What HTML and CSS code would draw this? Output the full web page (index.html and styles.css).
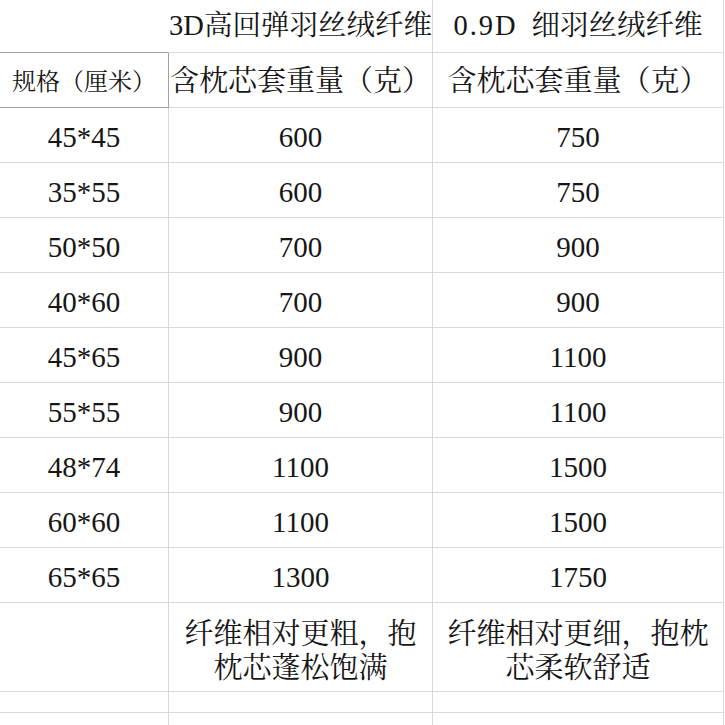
FILE: index.html
```html
<!DOCTYPE html>
<html lang="zh">
<head>
<meta charset="utf-8">
<title>枕芯规格</title>
<link rel="stylesheet" href="styles.css">
</head>
<body>
<div class="sheet">
  <div class="cell top first sel-bottom"></div>
  <div class="cell top">3D高回弹羽丝绒纤维</div>
  <div class="cell top"><span class="half">0.9D</span>细羽丝绒纤维</div>

  <div class="cell spec sel">规格（厘米）</div>
  <div class="cell">含枕芯套重量（克）</div>
  <div class="cell">含枕芯套重量（克）</div>

  <div class="cell num">45*45</div><div class="cell num">600</div><div class="cell num">750</div>
  <div class="cell num">35*55</div><div class="cell num">600</div><div class="cell num">750</div>
  <div class="cell num">50*50</div><div class="cell num">700</div><div class="cell num">900</div>
  <div class="cell num">40*60</div><div class="cell num">700</div><div class="cell num">900</div>
  <div class="cell num">45*65</div><div class="cell num">900</div><div class="cell num">1100</div>
  <div class="cell num">55*55</div><div class="cell num">900</div><div class="cell num">1100</div>
  <div class="cell num">48*74</div><div class="cell num">1100</div><div class="cell num">1500</div>
  <div class="cell num">60*60</div><div class="cell num">1100</div><div class="cell num">1500</div>
  <div class="cell num">65*65</div><div class="cell num">1300</div><div class="cell num">1750</div>

  <div class="cell desc"></div>
  <div class="cell desc"><span class="wrap">纤维相对更粗，抱<br>枕芯蓬松饱满</span></div>
  <div class="cell desc"><span class="wrap">纤维相对更细，抱枕<br>芯柔软舒适</span></div>

  <div class="cell"></div><div class="cell"></div><div class="cell"></div>
  <div class="cell"></div><div class="cell"></div><div class="cell"></div>
</div>
</body>
</html>
```

FILE: styles.css
```css
html, body {
  margin: 0;
  padding: 0;
  background: #ffffff;
}

body {
  width: 725px;
  height: 725px;
  overflow: hidden;
  font-family: "Liberation Serif", "Noto Serif CJK SC", "Noto Sans CJK SC", serif;
  color: #161616;
}

.sheet {
  display: grid;
  grid-template-columns: 169px 264px 291px;
  grid-template-rows: 53px repeat(10, 55px) 89px 21px 21px;
}

.cell {
  box-sizing: border-box;
  border-right: 1px solid #d9d9d9;
  border-bottom: 1px solid #d9d9d9;
  display: flex;
  align-items: center;
  justify-content: center;
  font-size: 29px;
  line-height: 1;
  white-space: nowrap;
  padding-top: 3px;
}

.top {
  padding-top: 1px;
  font-size: 28.5px;
}

.top.first {
  border-right-color: transparent;
}

.half {
  letter-spacing: 2px;
  margin-right: 14px;
}

.sel-bottom {
  border-bottom-color: #a3a3a3;
}

.sel {
  border-right-color: #a3a3a3;
  border-bottom-color: #a3a3a3;
}

.spec {
  font-size: 24px;
  padding-top: 4px;
}

.num {
  padding-top: 5px;
}

.desc {
  padding-top: 8px;
}

.wrap {
  display: block;
  text-align: center;
  line-height: 34px;
}
```
